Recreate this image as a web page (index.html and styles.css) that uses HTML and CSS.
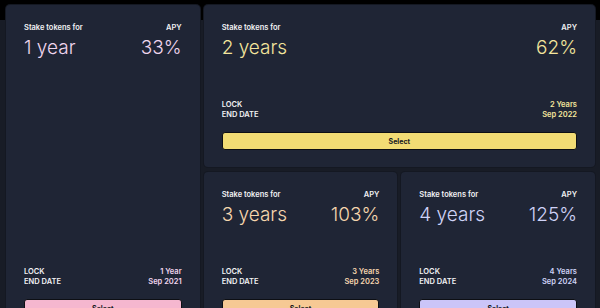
FILE: index.html
```html
<!DOCTYPE html>
<html lang="en">

<head>
  <meta charset="UTF-8">
  <meta name="viewport" content="width=device-width, initial-scale=1.0">
  <title>Stake tokens</title>
  <link rel="stylesheet" href="styles.css">
</head>

<body>
  <main class="plans">
    <section class="plan plan--pink plan--tall">
      <div class="plan-head">
        <span class="label">Stake tokens for</span>
        <span class="label">APY</span>
      </div>
      <div class="plan-big">
        <span>1 year</span>
        <span>33%</span>
      </div>
      <div class="plan-foot">
        <div class="row"><span class="label">LOCK</span><span class="value">1 Year</span></div>
        <div class="row"><span class="label">END DATE</span><span class="value">Sep 2021</span></div>
        <button class="select">Select</button>
      </div>
    </section>

    <section class="plan plan--yellow plan--wide">
      <div class="plan-head">
        <span class="label">Stake tokens for</span>
        <span class="label">APY</span>
      </div>
      <div class="plan-big">
        <span>2 years</span>
        <span>62%</span>
      </div>
      <div class="plan-foot">
        <div class="row"><span class="label">LOCK</span><span class="value">2 Years</span></div>
        <div class="row"><span class="label">END DATE</span><span class="value">Sep 2022</span></div>
        <button class="select">Select</button>
      </div>
    </section>

    <section class="plan plan--orange">
      <div class="plan-head">
        <span class="label">Stake tokens for</span>
        <span class="label">APY</span>
      </div>
      <div class="plan-big">
        <span>3 years</span>
        <span>103%</span>
      </div>
      <div class="plan-foot">
        <div class="row"><span class="label">LOCK</span><span class="value">3 Years</span></div>
        <div class="row"><span class="label">END DATE</span><span class="value">Sep 2023</span></div>
        <button class="select">Select</button>
      </div>
    </section>

    <section class="plan plan--violet">
      <div class="plan-head">
        <span class="label">Stake tokens for</span>
        <span class="label">APY</span>
      </div>
      <div class="plan-big">
        <span>4 years</span>
        <span>125%</span>
      </div>
      <div class="plan-foot">
        <div class="row"><span class="label">LOCK</span><span class="value">4 Years</span></div>
        <div class="row"><span class="label">END DATE</span><span class="value">Sep 2024</span></div>
        <button class="select">Select</button>
      </div>
    </section>
  </main>
</body>

</html>
```

FILE: styles.css
```css
* {
  box-sizing: border-box;
  margin: 0;
  padding: 0;
}

html {
  font-family: "Inter", "Noto Sans", sans-serif;
  color: #fff;
}

body {
  min-height: 100vh;
  background: linear-gradient(#000 0 20px, #181c26 20px);
}

.plans {
  display: grid;
  grid-template-columns: 1fr 1fr 1fr;
  grid-template-rows: 162px 162px;
  column-gap: 4px;
  row-gap: 5px;
  padding: 5px 5px 0 6px;
}

.plan {
  --accent: #fff;
  --accent-text: #fff;
  display: flex;
  flex-direction: column;
  background: #1f2535;
  border-radius: 4px;
  box-shadow: 0 0 0 1px #141822;
  padding: 18px 18px 17px;
}

.plan--tall {
  grid-row: span 2;
}

.plan--wide {
  grid-column: span 2;
}

.plan--pink {
  --accent: #f5b7cf;
  --accent-text: #f0d6ee;
}

.plan--yellow {
  --accent: #f2dc74;
  --accent-text: #f4e59d;
}

.plan--orange {
  --accent: #f6c994;
  --accent-text: #f6d6ae;
}

.plan--violet {
  --accent: #cbc5f8;
  --accent-text: #cfd3f7;
}

.label {
  font-size: 7.5px;
  font-weight: 600;
  line-height: 10px;
  color: #f2f2f4;
}

.plan-head,
.plan-big,
.row {
  display: flex;
  justify-content: space-between;
}

.plan-big {
  margin-top: 4px;
  font-size: 19px;
  font-weight: 300;
  line-height: 22px;
  color: var(--accent-text);
}

.plan-foot {
  margin-top: auto;
}

.value {
  font-size: 7.5px;
  font-weight: 600;
  line-height: 10px;
  color: var(--accent-text);
}

.select {
  display: block;
  width: 100%;
  height: 18px;
  margin-top: 12px;
  font-family: inherit;
  font-size: 7px;
  font-weight: 700;
  color: #1b1b1f;
  background: var(--accent);
  border: 1px solid #0d0f14;
  border-radius: 3px;
  cursor: pointer;
}
```
